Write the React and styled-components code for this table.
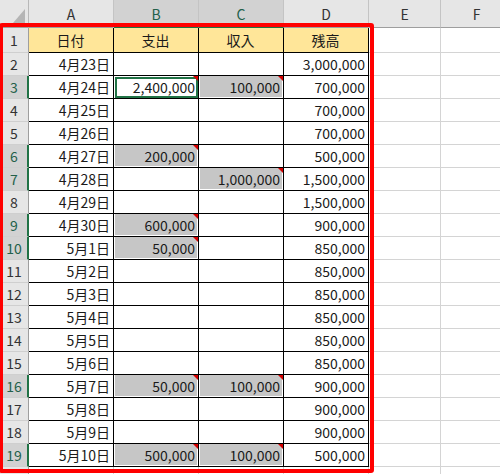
import React from 'react';
import styled, { createGlobalStyle, css } from 'styled-components';

const GlobalStyle = createGlobalStyle`
  html, body {
    margin: 0;
    padding: 0;
    background: #fff;
    overflow: hidden;
  }
  body {
    font-family: "Noto Sans CJK JP", "Noto Sans", sans-serif;
  }
`;

const GREEN = '#217346';
const HEAD_BG = '#e6e6e6';
const HEAD_SEL = '#d2d2d2';
const FILL_SEL = '#c6c6c6';

const Sheet = styled.div`
  position: relative;
  width: 500px;
  height: 474px;
  overflow: hidden;
  display: grid;
  grid-template-columns: 29px 85px 85px 85px 85px 72px 72px;
  grid-template-rows: 28px 25px repeat(18, 23px) 23px;
`;

const Corner = styled.div`
  position: relative;
  background: ${HEAD_BG};
  border-right: 1px solid #b8b8b8;
  border-bottom: 1px solid #9e9e9e;
  box-sizing: border-box;
  &::after {
    content: '';
    position: absolute;
    right: 3px;
    bottom: 4px;
    border-left: 12px solid transparent;
    border-bottom: 14px solid #b5b5b5;
  }
`;

const ColHead = styled.div`
  box-sizing: border-box;
  display: flex;
  align-items: center;
  justify-content: center;
  font-size: 14px;
  color: ${(p) => (p.$sel ? '#23604a' : '#333')};
  background: ${(p) => (p.$sel ? HEAD_SEL : HEAD_BG)};
  border-right: 1px solid #c4c4c4;
  border-bottom: ${(p) => (p.$sel ? `2px solid ${GREEN}` : '1px solid #9e9e9e')};
  padding-top: ${(p) => (p.$sel ? '1px' : '0')};
`;

const RowHead = styled.div`
  box-sizing: border-box;
  display: flex;
  align-items: center;
  justify-content: center;
  font-size: 14px;
  color: ${(p) => (p.$sel ? '#23604a' : '#333')};
  background: ${(p) => (p.$sel ? HEAD_SEL : HEAD_BG)};
  border-bottom: 1px solid #cfcfcf;
  border-right: ${(p) => (p.$sel ? `2px solid ${GREEN}` : '1px solid #9e9e9e')};
  padding-left: ${(p) => (p.$sel ? '1px' : '0')};
`;

const Cell = styled.div`
  position: relative;
  box-sizing: border-box;
  display: flex;
  align-items: center;
  justify-content: ${(p) => (p.$center ? 'center' : 'flex-end')};
  padding: 0 3px 0 2px;
  font-size: 14px;
  color: #1a1a1a;
  white-space: nowrap;
  border-right: 1px solid ${(p) => (p.$grid ? '#d4d4d4' : '#000')};
  border-bottom: 1px solid ${(p) => (p.$grid ? '#d4d4d4' : '#000')};
  background: ${(p) => (p.$title ? '#ffe699' : '#fff')};
  ${(p) =>
    p.$sel &&
    css`
      background: ${FILL_SEL};
      box-shadow: inset 1px -1px 0 #fff, inset -1px 0 0 #fff;
    `}
  ${(p) =>
    p.$active &&
    css`
      background: #fff;
      box-shadow: none;
      &::after {
        content: '';
        position: absolute;
        top: 1px;
        left: 1px;
        right: 0;
        bottom: 0;
        border: 2px solid ${GREEN};
      }
    `}
  ${(p) =>
    p.$note &&
    css`
      &::before {
        content: '';
        position: absolute;
        top: 0;
        right: 0;
        z-index: 1;
        border-left: 5px solid transparent;
        border-top: 5px solid #d40000;
      }
    `}
`;

const Frame = styled.div`
  position: absolute;
  left: -1px;
  top: 23px;
  width: 375px;
  height: 450px;
  box-sizing: border-box;
  border: 4px solid #ff0000;
  border-radius: 3px;
  pointer-events: none;
`;

const cols = ['A', 'B', 'C', 'D', 'E', 'F'];

// [date, 支出, 収入, 残高]; flags: b/c = selected with comment
const rows = [
  ['4月23日', '', '', '3,000,000'],
  ['4月24日', '2,400,000', '100,000', '700,000', 'bc', 'active'],
  ['4月25日', '', '', '700,000'],
  ['4月26日', '', '', '700,000'],
  ['4月27日', '200,000', '', '500,000', 'b'],
  ['4月28日', '', '1,000,000', '1,500,000', 'c'],
  ['4月29日', '', '', '1,500,000'],
  ['4月30日', '600,000', '', '900,000', 'b'],
  ['5月1日', '50,000', '', '850,000', 'b'],
  ['5月2日', '', '', '850,000'],
  ['5月3日', '', '', '850,000'],
  ['5月4日', '', '', '850,000'],
  ['5月5日', '', '', '850,000'],
  ['5月6日', '', '', '850,000'],
  ['5月7日', '50,000', '100,000', '900,000', 'bc'],
  ['5月8日', '', '', '900,000'],
  ['5月9日', '', '', '900,000'],
  ['5月10日', '500,000', '100,000', '500,000', 'bc'],
];

export default function App() {
  return (
    <>
      <GlobalStyle />
      <Sheet>
        <Corner />
        {cols.map((c) => (
          <ColHead key={c} $sel={c === 'B' || c === 'C'}>
            {c}
          </ColHead>
        ))}

        <RowHead>1</RowHead>
        {['日付', '支出', '収入', '残高'].map((t) => (
          <Cell key={t} $title $center>
            {t}
          </Cell>
        ))}
        <Cell $grid />
        <Cell $grid />

        {rows.map(([date, out, inc, bal, flags = '', active], i) => {
          const selB = flags.includes('b');
          const selC = flags.includes('c');
          return (
            <React.Fragment key={date}>
              <RowHead $sel={!!flags}>{i + 2}</RowHead>
              <Cell>{date}</Cell>
              <Cell $sel={selB} $active={!!active} $note={selB}>
                {out}
              </Cell>
              <Cell $sel={selC} $note={selC}>
                {inc}
              </Cell>
              <Cell>{bal}</Cell>
              <Cell $grid />
              <Cell $grid />
            </React.Fragment>
          );
        })}

        <RowHead>20</RowHead>
        {cols.map((c) => (
          <Cell key={c} $grid />
        ))}
        <Frame />
      </Sheet>
    </>
  );
}
